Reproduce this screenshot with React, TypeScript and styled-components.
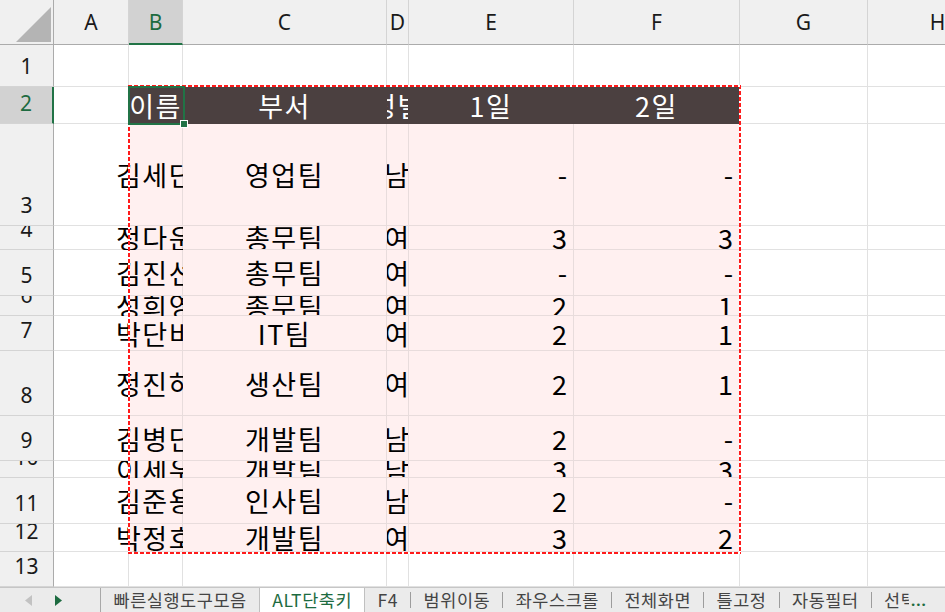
import * as React from "react";
import styled, { createGlobalStyle } from "styled-components";

const GlobalStyle = createGlobalStyle`
  html, body {
    margin: 0;
    padding: 0;
    background: #ffffff;
    overflow: hidden;
  }
`;

const KR = `"Noto Sans CJK KR", "Noto Sans", sans-serif`;
const UI = `"Noto Sans", "Noto Sans CJK KR", sans-serif`;
const GREEN = "#217346";

type Tone = "plain" | "pink" | "dark";

const tones = {
  plain: { bg: "#ffffff", line: "#e1e1e1", fg: "#000000" },
  pink: { bg: "#fff0f0", line: "#e8dcdc", fg: "#000000" },
  dark: { bg: "#4b4040", line: "#4b4040", fg: "#ffffff" },
};

const SSheet = styled.div`
  width: 945px;
  height: 612px;
  display: flex;
  flex-direction: column;
  overflow: hidden;
`;

const SGrid = styled.div`
  position: relative;
  flex: 0 0 587px;
  overflow: hidden;
`;

const SRow = styled.div<{ $h: number }>`
  display: flex;
  height: ${(p) => p.$h}px;
  width: 1100px;
`;

const SCorner = styled.div`
  flex: 0 0 54px;
  box-sizing: border-box;
  background: #f0f0f0;
  border-right: 1px solid #ababab;
  border-bottom: 1px solid #ababab;
  display: flex;
  align-items: flex-end;
  justify-content: flex-end;
  padding: 0 2px 2px 0;
`;

const SColHead = styled.div<{ $w: number; $active?: boolean }>`
  flex: 0 0 ${(p) => p.$w}px;
  min-width: 0;
  box-sizing: border-box;
  display: flex;
  align-items: center;
  justify-content: center;
  overflow: hidden;
  background: ${(p) => (p.$active ? "#d2d2d2" : "#f0f0f0")};
  border-right: 1px solid #d4d4d4;
  border-bottom: ${(p) => (p.$active ? `2px solid ${GREEN}` : "1px solid #ababab")};
  color: ${(p) => (p.$active ? "#1d6b40" : "#1a1a1a")};
  font: 21px/1 ${UI};
  padding-top: ${(p) => (p.$active ? 1 : 0)}px;
`;

const SRowHead = styled.div<{ $active?: boolean }>`
  flex: 0 0 54px;
  box-sizing: border-box;
  display: flex;
  align-items: flex-end;
  justify-content: center;
  overflow: hidden;
  padding-bottom: 9px;
  background: ${(p) => (p.$active ? "#d2d2d2" : "#f0f0f0")};
  border-right: ${(p) => (p.$active ? `2px solid ${GREEN}` : "1px solid #ababab")};
  border-bottom: 1px solid #d4d4d4;
  color: ${(p) => (p.$active ? "#1d6b40" : "#1a1a1a")};
  font: 21px/21px ${UI};
  & span {
    white-space: nowrap;
  }
`;

const SCell = styled.div<{
  $w: number;
  $tone: Tone;
  $align?: "center" | "right";
  $spill?: boolean;
}>`
  flex: 0 0 ${(p) => p.$w}px;
  width: ${(p) => p.$w}px;
  min-width: 0;
  box-sizing: border-box;
  display: flex;
  align-items: center;
  justify-content: ${(p) => (p.$align === "right" ? "flex-end" : "center")};
  padding-right: ${(p) => (p.$align === "right" ? 6 : 0)}px;
  white-space: nowrap;
  background: ${(p) => tones[p.$tone].bg};
  color: ${(p) => tones[p.$tone].fg};
  border-right: 1px solid ${(p) => tones[p.$tone].line};
  border-bottom: 1px solid ${(p) => tones[p.$tone].line};
  font: 27px/1 ${KR};
  letter-spacing: ${(p) => (p.$align === "right" ? 0 : 1.5)}px;
  ${(p) => (p.$spill ? "clip-path: inset(0 0 0 -90px);" : "overflow: hidden;")}
`;

const SAnts = styled.div`
  position: absolute;
  left: 128px;
  top: 85px;
  width: 613px;
  height: 469px;
  pointer-events: none;
  background:
    repeating-linear-gradient(90deg, #ff1a1a 0 4px, #ffffff 4px 6px) top left / 100% 2px no-repeat,
    repeating-linear-gradient(90deg, #ff1a1a 0 4px, #ffffff 4px 6px) bottom left / 100% 2px no-repeat,
    repeating-linear-gradient(180deg, #ff1a1a 0 4px, #ffffff 4px 6px) top left / 2px 100% no-repeat,
    repeating-linear-gradient(180deg, #ff1a1a 0 4px, #ffffff 4px 6px) top right / 2px 100% no-repeat;
`;

const SSelection = styled.div`
  position: absolute;
  left: 128px;
  top: 86px;
  width: 57px;
  height: 39px;
  box-sizing: border-box;
  border: 2px solid ${GREEN};
  pointer-events: none;
`;

const SHandle = styled.div`
  position: absolute;
  right: -5px;
  bottom: -5px;
  width: 8px;
  height: 8px;
  box-sizing: border-box;
  background: ${GREEN};
  border: 1px solid #ffffff;
`;

const STabBar = styled.div`
  flex: 0 0 25px;
  box-sizing: border-box;
  display: flex;
  background: #ebebeb;
  border-top: 1px solid #c6c6c6;
  font: 17.5px/1 ${KR};
  letter-spacing: 0.55px;
`;

const SNav = styled.div`
  flex: 0 0 101px;
  box-sizing: border-box;
  display: flex;
  align-items: center;
  padding-left: 25px;
  gap: 23px;
  border-right: 1px solid #a8a8a8;
`;

const STabs = styled.div`
  flex: 1;
  min-width: 0;
  display: flex;
  align-items: stretch;
  overflow: hidden;
  white-space: nowrap;
`;

const STab = styled.div<{ $active?: boolean }>`
  flex: 0 0 auto;
  display: flex;
  align-items: center;
  padding: 0 12px 0 12.5px;
  margin-top: ${(p) => (p.$active ? -1 : 0)}px;
  background: ${(p) => (p.$active ? "#ffffff" : "transparent")};
  color: ${(p) => (p.$active ? "#1d6b40" : "#444444")};
  border-left: ${(p) => (p.$active ? "1px solid #c0c0c0" : "none")};
  border-right: ${(p) => (p.$active ? "1px solid #c0c0c0" : "none")};
`;

const STabSep = styled.span`
  flex: 0 0 1px;
  align-self: center;
  height: 16px;
  background: #9c9c9c;
`;

const SMore = styled.div`
  flex: 0 0 34px;
  display: flex;
  align-items: center;
  padding-left: 2px;
  color: #1d6b40;
  font: bold 15px/1 ${UI};
  letter-spacing: 1px;
`;

const COLS = [
  { key: "A", w: 75 },
  { key: "B", w: 54 },
  { key: "C", w: 204 },
  { key: "D", w: 22 },
  { key: "E", w: 165 },
  { key: "F", w: 166 },
  { key: "G", w: 128 },
  { key: "H", w: 140 },
];

const ROW_HEIGHTS = [42, 37, 102, 24, 46, 20, 35, 65, 45, 17, 46, 28, 35];

const TABLE: string[][] = [
  ["이름", "부서", "성별", "1일", "2일"],
  ["김세단", "영업팀", "남", "-", "-"],
  ["정다운", "총무팀", "여", "3", "3"],
  ["김진선", "총무팀", "여", "-", "-"],
  ["성희영", "총무팀", "여", "2", "1"],
  ["박단비", "IT팀", "여", "2", "1"],
  ["정진하", "생산팀", "여", "2", "1"],
  ["김병단", "개발팀", "남", "2", "-"],
  ["이세우", "개발팀", "남", "3", "3"],
  ["김준용", "인사팀", "남", "2", "-"],
  ["박정호", "개발팀", "여", "3", "2"],
];

const TABS = ["빠른실행도구모음", "ALT단축키", "F4", "범위이동", "좌우스크롤", "전체화면", "틀고정", "자동필터", "선택하기"];
const ACTIVE_TAB = 1;

const Corner = () => (
  <SCorner>
    <svg width="35" height="35" viewBox="0 0 35 35">
      <polygon points="0,35 35,35 35,0" fill="#b4b4b4" />
    </svg>
  </SCorner>
);

const SheetRow = ({ n, h }: { n: number; h: number }) => {
  const data = n >= 2 && n <= 12 ? TABLE[n - 2] : null;
  const tone: Tone = n === 2 ? "dark" : "pink";
  return (
    <SRow $h={h}>
      <SRowHead $active={n === 2}>
        <span>{n}</span>
      </SRowHead>
      {COLS.map((c, i) => {
        const inTable = data && i >= 1 && i <= 5;
        if (!inTable) return <SCell key={c.key} $w={c.w} $tone="plain" />;
        const numeric = n !== 2 && i >= 4;
        return (
          <SCell
            key={c.key}
            $w={c.w}
            $tone={tone}
            $align={numeric ? "right" : "center"}
            $spill={i === 1 && n !== 2}
          >
            {data![i - 1]}
          </SCell>
        );
      })}
    </SRow>
  );
};

const TabBar = () => (
  <STabBar>
    <SNav>
      <svg width="7" height="11" viewBox="0 0 7 11">
        <polygon points="7,0 7,11 0,5.5" fill="#c2c2c2" />
      </svg>
      <svg width="7" height="11" viewBox="0 0 7 11">
        <polygon points="0,0 0,11 7,5.5" fill="#1d6b40" />
      </svg>
    </SNav>
    <STabs>
      {TABS.map((t, i) => (
        <React.Fragment key={t}>
          {i > 0 && i !== ACTIVE_TAB && i !== ACTIVE_TAB + 1 && <STabSep />}
          <STab $active={i === ACTIVE_TAB}>{t}</STab>
        </React.Fragment>
      ))}
    </STabs>
    <SMore>...</SMore>
  </STabBar>
);

const App = () => {
  return (
    <>
      <GlobalStyle />
      <SSheet>
        <SGrid>
          <SRow $h={45}>
            <Corner />
            {COLS.map((c) => (
              <SColHead key={c.key} $w={c.w} $active={c.key === "B"}>
                {c.key}
              </SColHead>
            ))}
          </SRow>
          {ROW_HEIGHTS.map((h, i) => (
            <SheetRow key={i} n={i + 1} h={h} />
          ))}
          <SAnts />
          <SSelection>
            <SHandle />
          </SSelection>
        </SGrid>
        <TabBar />
      </SSheet>
    </>
  );
};

export default App;
